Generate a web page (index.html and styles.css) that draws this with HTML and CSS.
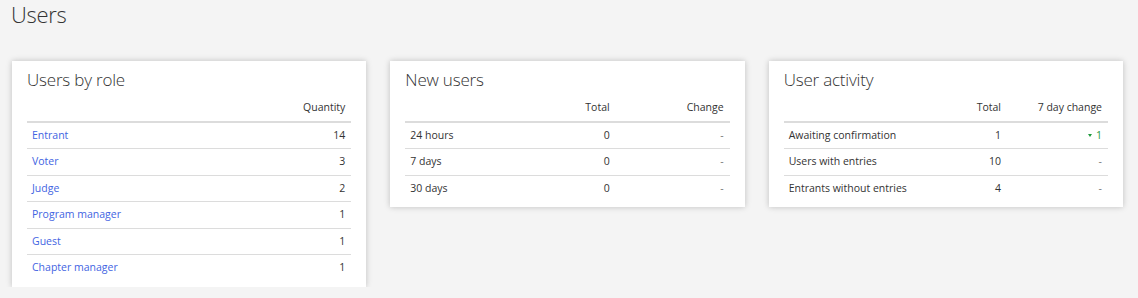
FILE: index.html
```html
<!DOCTYPE html>
<html lang="en">
<head>
<meta charset="utf-8">
<title>Users</title>
<link rel="stylesheet" href="styles.css">
</head>
<body>
<div class="page">
  <h1 class="page-title">Users</h1>
  <div class="cards">
    <section class="card">
      <h2 class="card-title">Users by role</h2>
      <table class="stats">
        <thead>
          <tr><th class="label"></th><th class="num">Quantity</th></tr>
        </thead>
        <tbody>
          <tr><td><a href="#">Entrant</a></td><td class="num">14</td></tr>
          <tr><td><a href="#">Voter</a></td><td class="num">3</td></tr>
          <tr><td><a href="#">Judge</a></td><td class="num">2</td></tr>
          <tr><td><a href="#">Program manager</a></td><td class="num">1</td></tr>
          <tr><td><a href="#">Guest</a></td><td class="num">1</td></tr>
          <tr><td><a href="#">Chapter manager</a></td><td class="num">1</td></tr>
        </tbody>
      </table>
    </section>
    <section class="card">
      <h2 class="card-title">New users</h2>
      <table class="stats">
        <colgroup><col><col class="col-total-a"><col class="col-change-a"></colgroup>
        <thead>
          <tr><th class="label"></th><th class="num">Total</th><th class="num">Change</th></tr>
        </thead>
        <tbody>
          <tr><td>24 hours</td><td class="num">0</td><td class="num muted">-</td></tr>
          <tr><td>7 days</td><td class="num">0</td><td class="num muted">-</td></tr>
          <tr><td>30 days</td><td class="num">0</td><td class="num muted">-</td></tr>
        </tbody>
      </table>
    </section>
    <section class="card">
      <h2 class="card-title">User activity</h2>
      <table class="stats">
        <colgroup><col><col class="col-total-b"><col class="col-change-b"></colgroup>
        <thead>
          <tr><th class="label"></th><th class="num">Total</th><th class="num">7 day change</th></tr>
        </thead>
        <tbody>
          <tr><td>Awaiting confirmation</td><td class="num">1</td><td class="num up"><span class="arrow"></span>1</td></tr>
          <tr><td>Users with entries</td><td class="num">10</td><td class="num muted">-</td></tr>
          <tr><td>Entrants without entries</td><td class="num">4</td><td class="num muted">-</td></tr>
        </tbody>
      </table>
    </section>
  </div>
</div>
</body>
</html>
```
FILE: styles.css
```css
html, body {
  margin: 0;
  padding: 0;
  background: #f4f4f4;
}
body {
  font-family: "Open Sans", "Liberation Sans", sans-serif;
  color: #333;
  font-size: 10.5px;
}
.page {
  padding: 0 15px 0 12px;
}
.page-title {
  margin: 0 0 0 -1px;
  font-size: 22px;
  font-weight: 300;
  letter-spacing: -0.3px;
  line-height: 29px;
  color: #333;
}
.cards {
  margin-top: 32px;
  display: grid;
  grid-template-columns: repeat(3, 1fr);
  column-gap: 24px;
  align-items: start;
}
.card {
  background: #fff;
  padding: 7px 15px 6px 15px;
  box-shadow: 0 0 6px rgba(0, 0, 0, 0.22);
}
.card-title {
  margin: 0 0 3px 0;
  font-size: 17px;
  font-weight: 300;
  letter-spacing: -0.2px;
  line-height: 24px;
  color: #333;
}
.stats {
  width: 100%;
  border-collapse: collapse;
}
.stats th, .stats td {
  padding: 4px 6px 4px 5px;
  line-height: 17.5px;
  font-weight: 400;
  text-align: left;
}
.stats thead th {
  border-bottom: 2px solid #dcdcdc;
}
.stats tbody tr + tr td {
  border-top: 1px solid #dcdcdc;
}
.stats .num {
  text-align: right;
}
.col-total-a { width: 61px; }
.col-change-a { width: 114px; }
.col-total-b { width: 63px; }
.col-change-b { width: 101px; }
.stats a {
  color: #4264e2;
  text-decoration: none;
}
.muted {
  color: #777;
}
.up {
  color: #1e9a3c;
}
.arrow {
  display: inline-block;
  width: 0;
  height: 0;
  border-left: 2.5px solid transparent;
  border-right: 2.5px solid transparent;
  border-top: 3px solid #1e9a3c;
  margin-right: 4px;
  vertical-align: middle;
}
```
